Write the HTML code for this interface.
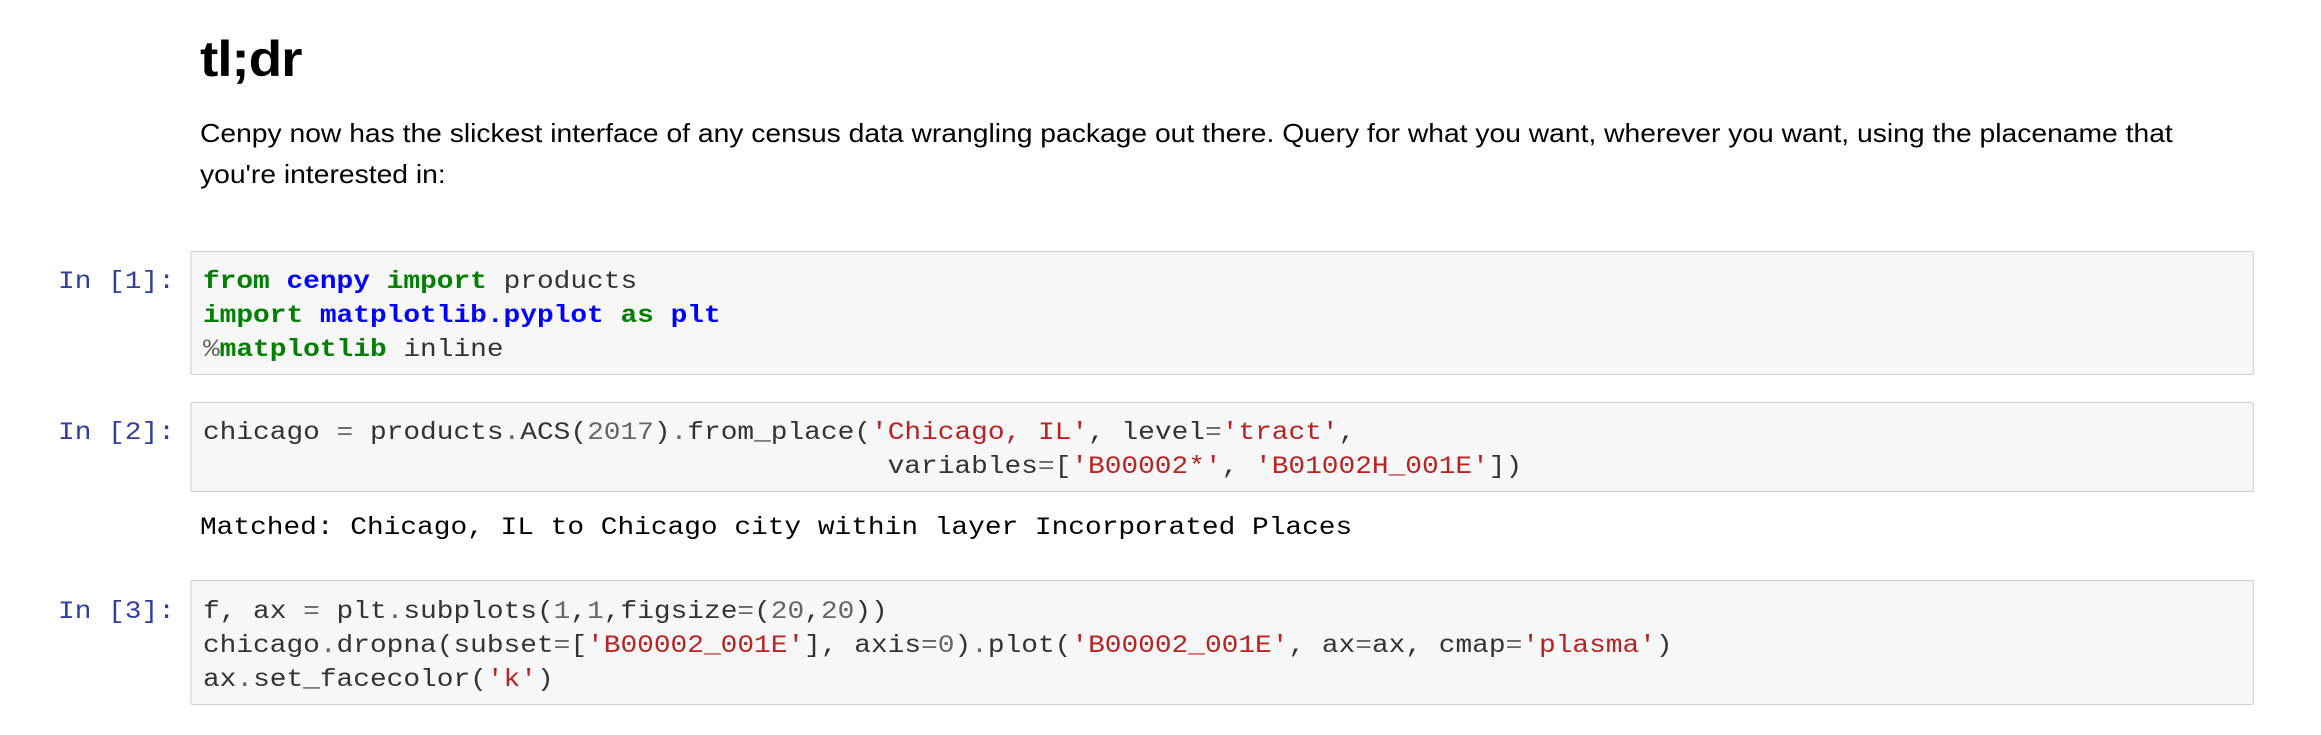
<!DOCTYPE html>
<html><head><meta charset="utf-8">
<style>
html,body{margin:0;padding:0;background:#fff;width:2321px;height:735px;overflow:hidden}
#w{position:absolute;left:0;top:0;width:2110px;height:735px;transform:scaleX(1.1);transform-origin:0 0}
.a{position:absolute;white-space:pre}
h1{position:absolute;margin:0;left:181.8px;top:34px;font:bold 50px/50px "Liberation Sans",sans-serif;color:#000;letter-spacing:-1px}
.p{left:181.8px;top:114px;font:25.7px/41px "Liberation Sans",sans-serif;color:#000}
.box{position:absolute;left:172.7px;width:1874px;background:#f7f7f7;border:1.5px solid #cfcfcf;border-radius:2px}
.m{font-family:"Liberation Mono",monospace;font-size:25.3px;line-height:34px;color:#333}
.pr{right:1951px;color:#303F9F;text-align:right}
.k{color:#008000;font-weight:bold}
.n{color:#0000FF;font-weight:bold}
.s{color:#BA2121}
.o{color:#666}
</style></head><body><div id="w">
<h1>tl;dr</h1>
<div class="a p">Cenpy now has the slickest interface of any census data wrangling package out there. Query for what you want, wherever you want, using the placename that
you're interested in:</div>

<div class="box" style="top:251px;height:122px"></div>
<div class="a m pr" style="top:265px">In [1]:</div>
<div class="a m" style="left:184.5px;top:265px"><span class="k">from</span> <span class="n">cenpy</span> <span class="k">import</span> products
<span class="k">import</span> <span class="n">matplotlib.pyplot</span> <span class="k">as</span> <span class="n">plt</span>
<span class="o">%</span><span class="k">matplotlib</span> inline</div>

<div class="box" style="top:402px;height:88px"></div>
<div class="a m pr" style="top:416px">In [2]:</div>
<div class="a m" style="left:184.5px;top:416px">chicago <span class="o">=</span> products<span class="o">.</span>ACS(<span class="o">2017</span>)<span class="o">.</span>from_place(<span class="s">'Chicago, IL'</span>, level<span class="o">=</span><span class="s">'tract'</span>,
                                         variables<span class="o">=</span>[<span class="s">'B00002*'</span>, <span class="s">'B01002H_001E'</span>])</div>

<div class="a m" style="left:181.8px;top:511px;color:#000">Matched: Chicago, IL to Chicago city within layer Incorporated Places</div>

<div class="box" style="top:580px;height:123px"></div>
<div class="a m pr" style="top:595px">In [3]:</div>
<div class="a m" style="left:184.5px;top:595px">f, ax <span class="o">=</span> plt<span class="o">.</span>subplots(<span class="o">1</span>,<span class="o">1</span>,figsize<span class="o">=</span>(<span class="o">20</span>,<span class="o">20</span>))
chicago<span class="o">.</span>dropna(subset<span class="o">=</span>[<span class="s">'B00002_001E'</span>], axis<span class="o">=0</span>)<span class="o">.</span>plot(<span class="s">'B00002_001E'</span>, ax<span class="o">=</span>ax, cmap<span class="o">=</span><span class="s">'plasma'</span>)
ax<span class="o">.</span>set_facecolor(<span class="s">'k'</span>)</div>
</div></body></html>
